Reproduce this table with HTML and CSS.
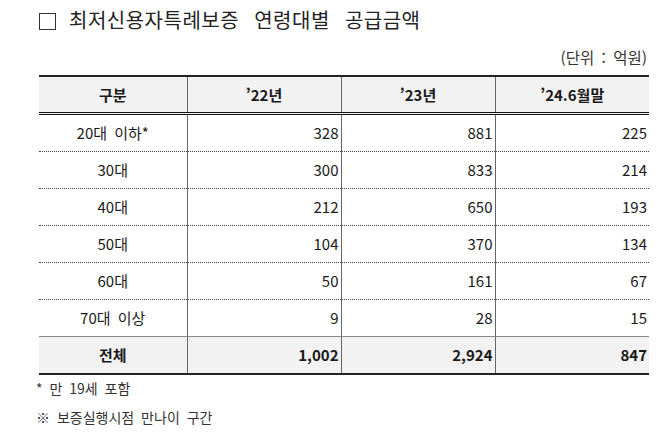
FILE: index.html
```html
<!DOCTYPE html>
<html lang="ko">
<head>
<meta charset="utf-8">
<link rel="stylesheet" href="styles.css">
</head>
<body>
<div class="page">
  <h1 class="title"><span class="box"></span><span class="title-text">최저신용자특례보증 연령대별 공급금액</span></h1>
  <div class="unit">(단위 : 억원)</div>
  <table class="tbl">
    <colgroup><col class="c1"><col class="c2"><col class="c2"><col class="c2"></colgroup>
    <thead>
      <tr><th>구분</th><th>’22년</th><th>’23년</th><th>’24.6월말</th></tr>
    </thead>
    <tbody>
      <tr><td class="lbl">20대 이하*</td><td>328</td><td>881</td><td>225</td></tr>
      <tr><td class="lbl">30대</td><td>300</td><td>833</td><td>214</td></tr>
      <tr><td class="lbl">40대</td><td>212</td><td>650</td><td>193</td></tr>
      <tr><td class="lbl">50대</td><td>104</td><td>370</td><td>134</td></tr>
      <tr><td class="lbl">60대</td><td>50</td><td>161</td><td>67</td></tr>
      <tr><td class="lbl">70대 이상</td><td>9</td><td>28</td><td>15</td></tr>
      <tr class="total"><td class="lbl">전체</td><td>1,002</td><td>2,924</td><td>847</td></tr>
    </tbody>
  </table>
  <p class="note">* 만 19세 포함</p>
  <p class="note note2">※ 보증실행시점 만나이 구간</p>
</div>
</body>
</html>
```
FILE: styles.css
```css
html, body {
  margin: 0;
  padding: 0;
  background: #ffffff;
}
body {
  font-family: "Noto Sans CJK KR", "Noto Sans", sans-serif;
  color: #1a1a1a;
}
.page {
  width: 610px;
  padding: 8px 0 0 39px;
}
.title {
  margin: 0;
  height: 24px;
  display: flex;
  align-items: center;
  font-weight: 400;
  white-space: nowrap;
}
.box {
  width: 15px;
  height: 15px;
  border: 1px solid #333;
  flex: none;
  margin-top: 2px;
}
.title-text {
  font-size: 20px;
  line-height: 24px;
  color: #222;
  margin-left: 13px;
  letter-spacing: 0.5px;
  word-spacing: 9px;
}
.unit {
  margin-top: 14px;
  text-align: right;
  padding-right: 2px;
  font-size: 15.5px;
  line-height: 22px;
  color: #333;
  word-spacing: 3px;
}
.tbl {
  margin-top: 7px;
  width: 610px;
  border-collapse: collapse;
  table-layout: fixed;
  font-size: 15px;
}
.c1 { width: 148px; }
.c2 { width: 154px; }
.tbl th {
  background: #f2f2f2;
  height: 35px;
  padding: 0;
  font-weight: 700;
  font-size: 15px;
  border-top: 2px solid #222;
  border-bottom: 3px double #111;
  border-left: 1px solid #666;
  text-align: center;
  vertical-align: middle;
}
.tbl th:first-child,
.tbl td:first-child {
  border-left: none;
}
.tbl td {
  height: 36px;
  padding: 0 2px 0 0;
  text-align: right;
  vertical-align: middle;
  border-left: 1px solid #666;
  border-bottom: 1px dotted #444;
  line-height: 20px;
}
.tbl td.lbl {
  text-align: center;
  padding: 0;
  word-spacing: 3px;
}
.tbl tr:nth-last-child(2) td {
  border-bottom: 1px solid #888;
}
.tbl .total td {
  background: #f2f2f2;
  font-weight: 700;
  border-bottom: 2px solid #222;
}
.note {
  margin: 3px 0 0 -3px;
  font-size: 14px;
  line-height: 20px;
  color: #333;
  word-spacing: 3px;
}
.note2 {
  margin-top: 9px;
}
```
